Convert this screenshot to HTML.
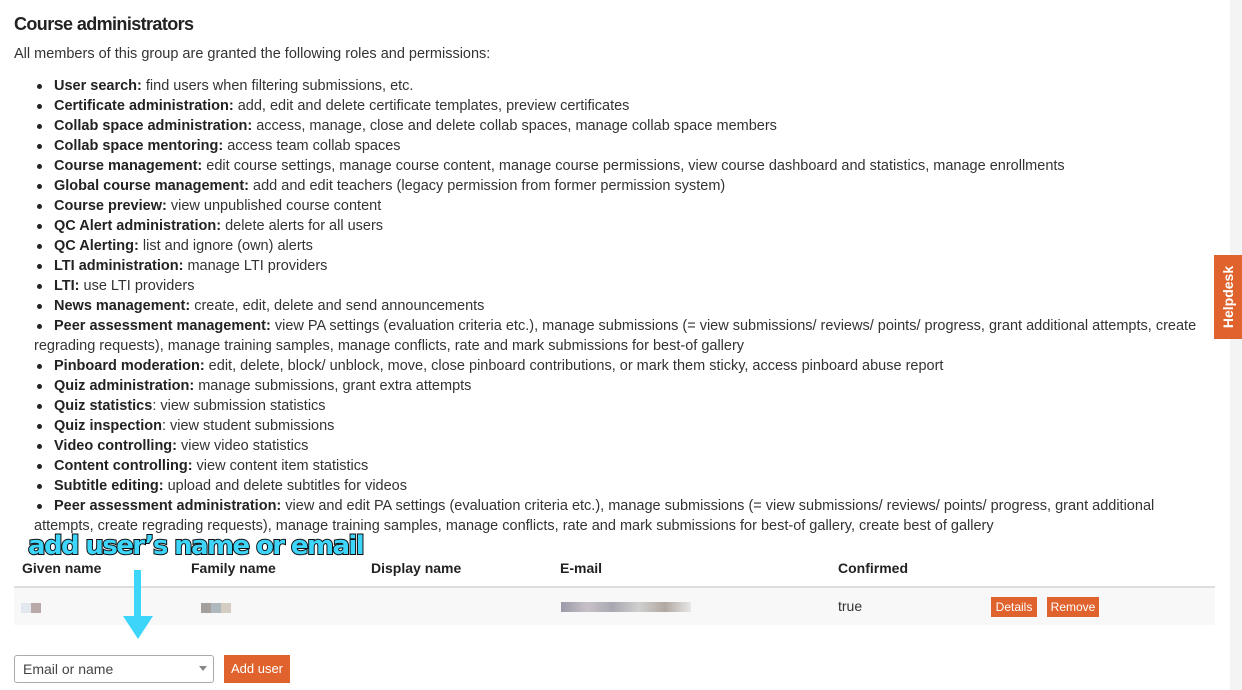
<!DOCTYPE html>
<html><head><style>
body{margin:0;width:1242px;height:690px;overflow:hidden;background:#fff;font-family:"Liberation Sans",sans-serif;color:#333;position:relative}
.r{position:absolute;right:0;top:0;width:12px;height:690px;background:#f4f4f4}
h1{position:absolute;left:14px;top:14px;margin:0;font-size:18px;font-weight:bold;color:#222;letter-spacing:-0.6px}
.p{position:absolute;left:14px;top:46px;font-size:14.5px}
ul{position:absolute;left:34px;top:76px;margin:0;padding:0;list-style:none;font-size:14.5px;line-height:20px;width:1180px}
li{padding-left:20px;position:relative;color:#333}
li:before{content:"";position:absolute;left:3px;top:8px;width:5px;height:5px;border-radius:50%;background:#222}
b{color:#222}
.th{position:absolute;top:560px;font-size:14px;font-weight:bold;color:#222}
.sep{position:absolute;left:14px;top:586px;width:1201px;height:2px;background:#ddd}
.row{position:absolute;left:14px;top:588px;width:1201px;height:37px;background:#f8f8f8}
.btn{position:absolute;background:#e0622c;color:#fff;font-size:12px;text-align:center}
.blur{position:absolute;height:10px}
</style></head><body>
<div class="r"></div>
<h1>Course administrators</h1>
<div class="p">All members of this group are granted the following roles and permissions:</div>
<ul>
<li><b>User search:</b> find users when filtering submissions, etc.</li>
<li><b>Certificate administration:</b> add, edit and delete certificate templates, preview certificates</li>
<li><b>Collab space administration:</b> access, manage, close and delete collab spaces, manage collab space members</li>
<li><b>Collab space mentoring:</b> access team collab spaces</li>
<li><b>Course management:</b> edit course settings, manage course content, manage course permissions, view course dashboard and statistics, manage enrollments</li>
<li><b>Global course management:</b> add and edit teachers (legacy permission from former permission system)</li>
<li><b>Course preview:</b> view unpublished course content</li>
<li><b>QC Alert administration:</b> delete alerts for all users</li>
<li><b>QC Alerting:</b> list and ignore (own) alerts</li>
<li><b>LTI administration:</b> manage LTI providers</li>
<li><b>LTI:</b> use LTI providers</li>
<li><b>News management:</b> create, edit, delete and send announcements</li>
<li style="white-space:nowrap"><b>Peer assessment management:</b> view PA settings (evaluation criteria etc.), manage submissions (= view submissions/ reviews/ points/ progress, grant additional attempts, create<br><span style="margin-left:-20px">regrading requests), manage training samples, manage conflicts, rate and mark submissions for best-of gallery</span></li>
<li><b>Pinboard moderation:</b> edit, delete, block/ unblock, move, close pinboard contributions, or mark them sticky, access pinboard abuse report</li>
<li><b>Quiz administration:</b> manage submissions, grant extra attempts</li>
<li><b>Quiz statistics</b>: view submission statistics</li>
<li><b>Quiz inspection</b>: view student submissions</li>
<li><b>Video controlling:</b> view video statistics</li>
<li><b>Content controlling:</b> view content item statistics</li>
<li><b>Subtitle editing:</b> upload and delete subtitles for videos</li>
<li style="white-space:nowrap"><b>Peer assessment administration:</b> view and edit PA settings (evaluation criteria etc.), manage submissions (= view submissions/ reviews/ points/ progress, grant additional<br><span style="margin-left:-20px">attempts, create regrading requests), manage training samples, manage conflicts, rate and mark submissions for best-of gallery, create best of gallery</span></li>
</ul>
<div class="th" style="left:22px">Given name</div>
<div class="th" style="left:191px">Family name</div>
<div class="th" style="left:371px">Display name</div>
<div class="th" style="left:560px">E-mail</div>
<div class="th" style="left:838px">Confirmed</div>
<div class="sep"></div>
<div class="row"></div>
<div class="blur" style="left:21px;top:603px;width:10px;background:#e3e8ef"></div>
<div class="blur" style="left:31px;top:603px;width:10px;background:#b9a9a9"></div>
<div class="blur" style="left:201px;top:603px;width:30px;background:linear-gradient(90deg,#a6a09d 33%,#aeb8bf 33%,#aeb8bf 66%,#d5cdc3 66%)"></div>
<div class="blur" style="left:561px;top:602px;width:130px;background:linear-gradient(90deg,#9a9aa8,#c8c0c8,#a8a8b0,#d0d0d0,#b0a8a0,#e8e8e8)"></div>
<div style="position:absolute;left:838px;top:598px;font-size:14px">true</div>
<div class="btn" style="left:991px;top:597px;width:46px;height:20px;line-height:20px">Details</div>
<div class="btn" style="left:1047px;top:597px;width:52px;height:20px;line-height:20px">Remove</div>
<div style="position:absolute;left:14px;top:655px;width:198px;height:26px;border:1px solid #aaa;border-radius:3px;font-size:14px;line-height:26px;color:#444;box-sizing:content-box"><span style="margin-left:8px">Email or name</span><span style="position:absolute;right:6px;top:10px;border-left:4px solid transparent;border-right:4px solid transparent;border-top:5px solid #888"></span></div>
<div class="btn" style="left:224px;top:655px;width:66px;height:28px;line-height:28px;font-size:13px">Add user</div>
<div style="position:absolute;left:28px;top:531px;font-size:26px;font-weight:bold;color:#3dd6fa;-webkit-text-stroke:2px #111;paint-order:stroke fill;font-family:'DejaVu Sans',sans-serif;letter-spacing:-1.6px">add user’s name or email</div>
<svg style="position:absolute;left:120px;top:570px" width="36" height="72"><rect x="14" y="0" width="7" height="48" fill="#3dd6fa"/><polygon points="3,46 33,46 18,69" fill="#3dd6fa"/></svg>
<div style="position:absolute;left:1214px;top:255px;width:28px;height:84px;background:#e0622c;color:#fff;font-size:14px;font-weight:bold"><div style="position:absolute;left:14px;top:42px;transform:translate(-50%,-50%) rotate(-90deg);white-space:nowrap">Helpdesk</div></div>
</body></html>
